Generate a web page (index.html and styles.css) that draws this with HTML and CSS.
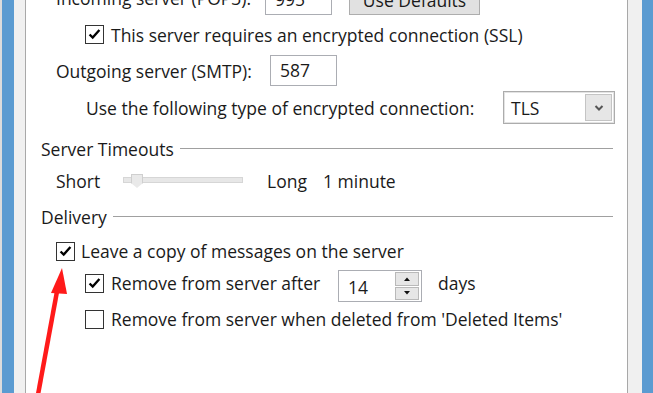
FILE: index.html
```html
<!DOCTYPE html>
<html lang="en">
<head>
    <meta charset="UTF-8">
    <title>Internet E-mail Settings - Advanced</title>
    <link rel="stylesheet" href="styles.css">
</head>
<body>

    <div class="frame">
        <div class="edge-left">
            <div class="desk"></div>
            <div class="win-blue"></div>
            <div class="win-grey"></div>
        </div>

        <div class="panel">

            <div class="row row-incoming ind1">
                <span class="label lbl-incoming">Incoming server (POP3):</span>
                <span class="textbox tb-port">995</span>
                <span class="button">Use Defaults</span>
            </div>

            <div class="row row-ssl ind2">
                <span class="check checked"><svg viewBox="0 0 19 19"><path d="M4 9.5 L7.5 13 L15 4.5" /></svg></span>
                <span class="label">This server requires an encrypted connection (SSL)</span>
            </div>

            <div class="row row-outgoing ind1">
                <span class="label lbl-outgoing">Outgoing server (SMTP):</span>
                <span class="textbox tb-port">587</span>
            </div>

            <div class="row row-enc ind2b">
                <span class="label lbl-enc">Use the following type of encrypted connection:</span>
                <span class="select">
                    <span class="select-value">TLS</span>
                    <span class="select-btn"><svg viewBox="0 0 10 8"><path d="M1.5 2 L5 5.5 L8.5 2" /></svg></span>
                </span>
            </div>

            <div class="group group-timeouts">
                <span class="group-title">Server Timeouts</span>
                <span class="group-line"></span>
            </div>

            <div class="row row-timeout ind1">
                <span class="label lbl-short">Short</span>
                <span class="slider">
                    <span class="slider-thumb"></span>
                </span>
                <span class="label lbl-long">Long</span>
                <span class="label">1 minute</span>
            </div>

            <div class="group group-delivery">
                <span class="group-title">Delivery</span>
                <span class="group-line"></span>
            </div>

            <div class="row row-leave ind1">
                <span class="check checked"><svg viewBox="0 0 19 19"><path d="M4 9.5 L7.5 13 L15 4.5" /></svg></span>
                <span class="label">Leave a copy of messages on the server</span>
            </div>

            <div class="row row-after ind2">
                <span class="check checked"><svg viewBox="0 0 19 19"><path d="M4 9.5 L7.5 13 L15 4.5" /></svg></span>
                <span class="label lbl-after">Remove from server after</span>
                <span class="spin">
                    <span class="spin-value">14</span>
                    <span class="spin-btns">
                        <span class="spin-btn"><svg viewBox="0 0 8 6"><path d="M1 5 L4 1.5 L7 5 Z" /></svg></span>
                        <span class="spin-btn"><svg viewBox="0 0 8 6"><path d="M1 1 L4 4.5 L7 1 Z" /></svg></span>
                    </span>
                </span>
                <span class="label lbl-days">days</span>
            </div>

            <div class="row row-deleted ind2">
                <span class="check"></span>
                <span class="label">Remove from server when deleted from 'Deleted Items'</span>
            </div>

        </div>

        <div class="edge-right">
            <div class="win-grey"></div>
            <div class="win-blue"></div>
        </div>
    </div>

    <!-- red annotation arrow drawn over the dialog -->
    <svg class="arrow" viewBox="0 0 653 393" width="653" height="393">
        <path class="arrow-shaft" d="M37 400 L58 286" />
        <polygon class="arrow-head" points="62,268 51,293 67,294" />
    </svg>

</body>
</html>
```

FILE: styles.css
```css
* {
    margin: 0;
    padding: 0;
    box-sizing: border-box;
}

body {
    width: 653px;
    height: 393px;
    overflow: hidden;
    background: #ffffff;
    font-family: 'Open Sans', 'Noto Sans', sans-serif;
    font-size: 17.5px;
    color: #1a1a1a;
    position: relative;
}

.frame {
    display: flex;
    height: 393px;
}


/* window borders */

.edge-left,
.edge-right {
    display: flex;
    flex-shrink: 0;
}

.desk {
    width: 2px;
    background: #dcdcdc;
}

.win-blue {
    width: 12px;
    background: #5b9bd1;
}

.edge-right .win-blue {
    width: 11px;
}

.win-grey {
    width: 11px;
    background: #f0f0f0;
}

.edge-left .win-grey {
    border-right: 1px solid #a8a8a8;
    width: 12px;
}

.edge-right .win-grey {
    border-left: 1px solid #a8a8a8;
    width: 15px;
}


/* panel */

.panel {
    flex: 1;
    padding-left: 15px;
    display: flex;
    flex-direction: column;
}

.row {
    display: flex;
    align-items: center;
    height: 20px;
    white-space: nowrap;
}

.ind1 { margin-left: 15px; }
.ind2 { margin-left: 44px; }
.ind2b { margin-left: 45px; }

.row-incoming { height: 32px; margin-top: -18px; }
.row-ssl { height: 41px; }
.row-outgoing { height: 31px; }
.row-enc { height: 33px; margin-top: 5px; }
.row-timeout { margin-top: 12px; }
.row-leave { margin-top: 14px; }
.row-after { margin-top: 12px; }
.row-deleted { margin-top: 16px; }

.label {
    line-height: 20px;
}

.lbl-incoming { width: 209px; }
.lbl-outgoing { width: 214px; }
.lbl-enc { width: 417px; }
.lbl-short { width: 67px; }
.lbl-long { width: 56px; margin-left: 24px; }
.lbl-after { width: 227px; }
.lbl-days { margin-left: 16px; }


/* controls */

.textbox {
    width: 67px;
    height: 31px;
    border: 1px solid #abadb3;
    background: #fff;
    padding-left: 9px;
    line-height: 29px;
}

.row-incoming .textbox {
    margin-top: 2px;
}

.button {
    margin-left: 17px;
    width: 131px;
    height: 30px;
    margin-top: 4px;
    border: 1px solid #adadad;
    background: #e1e1e1;
    text-align: center;
    line-height: 28px;
}

.check {
    width: 19px;
    height: 19px;
    border: 1px solid #333;
    background: #fff;
    margin-right: 7px;
    flex-shrink: 0;
}

.check svg {
    display: block;
    width: 17px;
    height: 17px;
}

.check path {
    fill: none;
    stroke: #000;
    stroke-width: 2.6;
}

.row-leave .check {
    margin-right: 6px;
}

.select {
    display: flex;
    align-items: center;
    width: 112px;
    height: 33px;
    border: 1px solid #acacac;
    padding: 2px;
    background: #fff;
    box-shadow: inset 0 0 0 1px #e3e3e3;
}

.select-value {
    flex: 1;
    padding-left: 5px;
}

.select-btn {
    width: 27px;
    height: 27px;
    background: #e6e6e6;
    border: 1px solid #c4c4c4;
    display: flex;
    align-items: center;
    justify-content: center;
}

.select-btn svg {
    width: 10px;
    height: 8px;
}

.select-btn path {
    fill: none;
    stroke: #555;
    stroke-width: 2;
}

.group {
    display: flex;
    align-items: center;
    height: 20px;
    padding-right: 14px;
}

.group-timeouts { margin-top: 15px; }
.group-delivery { margin-top: 16px; }

.group-title {
    line-height: 20px;
    white-space: nowrap;
}

.group-line {
    flex: 1;
    height: 1px;
    background: #a0a0a0;
    margin-left: 6px;
    margin-top: -1px;
}

.slider {
    position: relative;
    width: 120px;
    height: 6px;
    background: #e7e7e7;
    border: 1px solid #d6d6d6;
    margin-top: -2px;
}

.slider-thumb {
    position: absolute;
    left: 7px;
    top: -4px;
    width: 12px;
    height: 14px;
    background: #e9e9e9;
    border: 1px solid #cfcfcf;
    border-bottom: none;
    clip-path: polygon(0 0, 100% 0, 100% 65%, 50% 100%, 0 65%);
}

.spin {
    display: flex;
    width: 84px;
    height: 32px;
    margin-top: 6px;
    border: 1px solid #abadb3;
    background: #fff;
    padding: 1px 2px 1px 0;
}

.spin-value {
    flex: 1;
    padding-left: 9px;
    line-height: 30px;
}

.spin-btns {
    width: 24px;
    display: flex;
    flex-direction: column;
    gap: 1px;
}

.spin-btn {
    flex: 1;
    background: #e6e6e6;
    border: 1px solid #b9b9b9;
    display: flex;
    align-items: center;
    justify-content: center;
}

.spin-btn svg {
    width: 8px;
    height: 6px;
}

.spin-btn path {
    fill: #111;
}


/* annotation */

.arrow {
    position: absolute;
    left: 0;
    top: 0;
    pointer-events: none;
}

.arrow-shaft {
    stroke: #ff1a1a;
    stroke-width: 4.5;
    fill: none;
}

.arrow-head {
    fill: #ff1a1a;
}
```
